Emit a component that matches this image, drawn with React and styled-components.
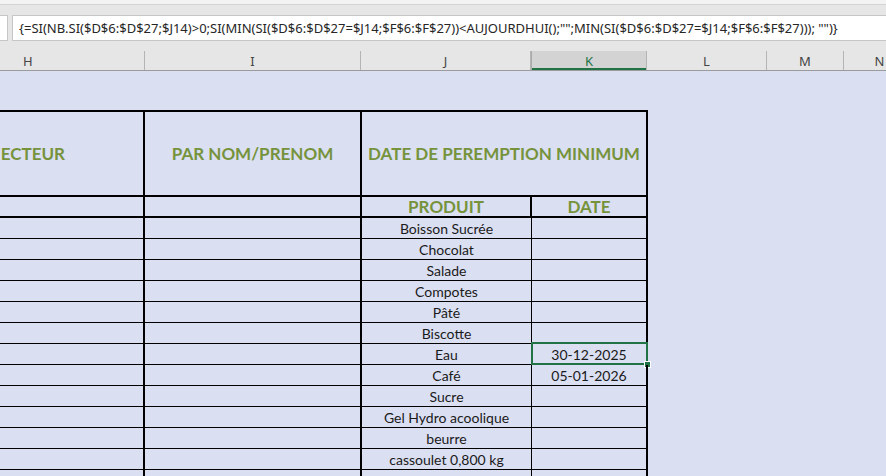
import styled, { createGlobalStyle } from 'styled-components';

const GlobalStyle = createGlobalStyle`
  html, body {
    margin: 0;
    padding: 0;
    background: #dadff2;
  }
  * {
    box-sizing: border-box;
  }
`;

const FORMULA =
  '{=SI(NB.SI($D$6:$D$27;$J14)>0;SI(MIN(SI($D$6:$D$27=$J14;$F$6:$F$27))<AUJOURDHUI();"";MIN(SI($D$6:$D$27=$J14;$F$6:$F$27))); "")}';

const columns = [
  { letter: 'H', width: 145, pad: 23 },
  { letter: 'I', width: 216 },
  { letter: 'J', width: 170 },
  { letter: 'K', width: 116, selected: true },
  { letter: 'L', width: 120 },
  { letter: 'M', width: 77 },
  { letter: 'N', width: 72 }
];

const products = [
  { name: 'Boisson Sucrée' },
  { name: 'Chocolat' },
  { name: 'Salade' },
  { name: 'Compotes' },
  { name: 'Pâté' },
  { name: 'Biscotte' },
  { name: 'Eau', date: '30-12-2025', selected: true },
  { name: 'Café', date: '05-01-2026' },
  { name: 'Sucre' },
  { name: 'Gel Hydro acoolique' },
  { name: 'beurre' },
  { name: 'cassoulet 0,800 kg' },
  { name: 'Thé' }
];

export default function App() {
  return (
    <Window>
      <GlobalStyle />
      <Ribbon />
      <FormulaArea>
        <NameBox />
        <FormulaInput>{FORMULA}</FormulaInput>
      </FormulaArea>
      <ColumnHeaders>
        {columns.map((c) => (
          <ColHead key={c.letter} $width={c.width} $pad={c.pad} $selected={c.selected}>
            {c.letter}
          </ColHead>
        ))}
      </ColumnHeaders>
      <Sheet>
        <Table>
          <TitleCell $right={2} $align="flex-end">ECTEUR</TitleCell>
          <TitleCell $right={2}>PAR NOM/PRENOM</TitleCell>
          <TitleCell $right={2} $span={2}>DATE DE PEREMPTION MINIMUM</TitleCell>

          <SubCell $right={2} />
          <SubCell $right={2} />
          <SubCell $right={2}>PRODUIT</SubCell>
          <SubCell $right={2}>DATE</SubCell>

          {products.map((p) => (
            <Row key={p.name}>
              <Cell $right={2} />
              <Cell $right={2} />
              <Cell $right={1}>{p.name}</Cell>
              <Cell $right={2} $selected={p.selected}>
                {p.date}
              </Cell>
            </Row>
          ))}
        </Table>
      </Sheet>
    </Window>
  );
}

const Window = styled.div`
  width: 886px;
  height: 476px;
  overflow: hidden;
  background: #dadff2;
  display: flex;
  flex-direction: column;
`;

const Ribbon = styled.div`
  height: 5px;
  flex: none;
  background: #f3f3f3;
  border-bottom: 1px solid #d4d4d4;
`;

const FormulaArea = styled.div`
  height: 46px;
  flex: none;
  background: #e6e6e6;
  display: flex;
  align-items: flex-start;
  gap: 4px;
  padding-top: 10px;
`;

const NameBox = styled.div`
  width: 8px;
  height: 26px;
  background: #fff;
  border: 1px solid #c6c6c6;
  border-left: none;
`;

const FormulaInput = styled.div`
  flex: 1;
  height: 26px;
  background: #fff;
  border: 1px solid #c6c6c6;
  border-right: none;
  padding-left: 6px;
  display: flex;
  align-items: center;
  white-space: nowrap;
  overflow: hidden;
  font-family: 'Noto Sans', 'Open Sans', sans-serif;
  font-size: 13px;
  color: #262626;
`;

const ColumnHeaders = styled.div`
  height: 20px;
  flex: none;
  background: #e6e6e6;
  border-bottom: 1px solid #9b9b9b;
  display: flex;
`;

const ColHead = styled.div`
  width: ${(p) => p.$width}px;
  flex: none;
  height: 19px;
  display: flex;
  align-items: center;
  justify-content: ${(p) => (p.$pad ? 'flex-start' : 'center')};
  padding-left: ${(p) => p.$pad || 0}px;
  border-right: 1px solid #b4b4b4;
  font-family: 'Noto Sans', 'Open Sans', sans-serif;
  font-size: 13px;
  color: #444;
  background: ${(p) => (p.$selected ? '#d3d3d3' : 'transparent')};
  border-left: ${(p) => (p.$selected ? '1px solid #ababab' : 'none')};
  box-shadow: ${(p) => (p.$selected ? 'inset 0 -2px 0 #217346' : 'none')};
  ${(p) => p.$selected && 'color: #217346;'}
`;

const Sheet = styled.div`
  flex: 1;
  padding-top: 39px;
`;

const Table = styled.div`
  display: grid;
  grid-template-columns: 145px 217px 170px 116px;
  width: 648px;
  border-top: 2px solid #000;
`;

const Row = styled.div`
  display: contents;
`;

const BaseCell = styled.div`
  display: flex;
  align-items: center;
  justify-content: ${(p) => p.$align || 'center'};
  border-right: ${(p) => p.$right}px solid #000;
  white-space: nowrap;
  overflow: hidden;
  font-family: Lato, 'Open Sans', sans-serif;
`;

const TitleCell = styled(BaseCell)`
  grid-column: span ${(p) => p.$span || 1};
  height: 85px;
  border-bottom: 2px solid #000;
  padding-right: ${(p) => (p.$align ? 78 : 0)}px;
  font-size: 17px;
  font-weight: 700;
  color: #76933c;
`;

const SubCell = styled(BaseCell)`
  height: 21px;
  border-bottom: 2px solid #000;
  font-size: 17px;
  font-weight: 700;
  color: #76933c;
`;

const Cell = styled(BaseCell)`
  position: relative;
  height: 21px;
  border-bottom: 1px solid #000;
  font-size: 14px;
  color: #1a1a1a;
  overflow: visible;

  ${(p) =>
    p.$selected &&
    `
    &::before {
      content: '';
      position: absolute;
      top: -2px;
      left: -1px;
      right: -2px;
      bottom: -1px;
      border: 2px solid #217346;
      pointer-events: none;
    }
    &::after {
      content: '';
      position: absolute;
      right: -4px;
      bottom: -3px;
      width: 5px;
      height: 5px;
      background: #217346;
      outline: 1px solid #fff;
    }
  `}
`;
